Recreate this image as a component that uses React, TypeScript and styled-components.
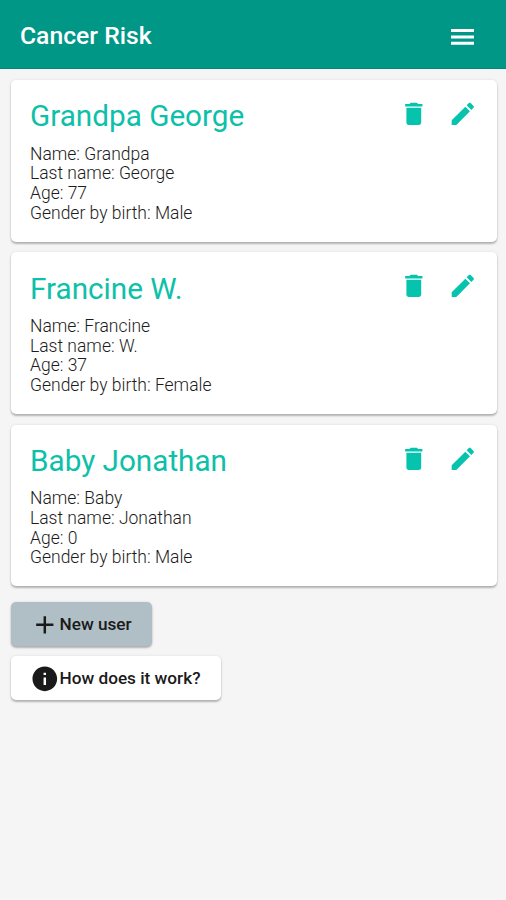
import React from "react";
import styled, { createGlobalStyle } from "styled-components";
import { MdAdd, MdDelete, MdEdit, MdInfo } from "react-icons/md";

const GlobalStyle = createGlobalStyle`
  *, *::before, *::after { box-sizing: border-box; }
  body { margin: 0; background: #f5f5f5; }
`;

const Screen = styled.div`
  min-height: 900px;
  background: #f5f5f5;
  font-family: Roboto, "Liberation Sans", sans-serif;
  color: #1c1c1c;
`;

const Toolbar = styled.header`
  display: flex;
  align-items: center;
  justify-content: space-between;
  height: 69px;
  padding: 3px 29px 0 20px;
  background: #009787;
  border-bottom: 1px solid #078577;
  color: #fff;
`;

const AppTitle = styled.h1`
  margin: 0;
  font-size: 24.7px;
  line-height: 32px;
  font-weight: 500;
  white-space: nowrap;
`;

const IconButton = styled.button`
  display: flex;
  padding: 0;
  border: 0;
  background: none;
  color: inherit;
  cursor: pointer;
  svg {
    width: 29.6px;
    height: 29.6px;
  }
`;

const MenuButton = styled(IconButton)`
  padding: 2px 3px 0;
  svg {
    width: 23px;
    height: 16px;
  }
`;

const Content = styled.main`
  padding: 11px 9.4px 0 10.6px;
`;

const CardList = styled.div`
  display: flex;
  flex-direction: column;
  gap: 10.7px;
`;

const Card = styled.section`
  height: 161.6px;
  padding: 17.3px 19.4px 0 19.4px;
  border-radius: 5px;
  background: #fff;
  box-shadow: 0 2px 2px rgba(0, 0, 0, 0.25), 0 0 3px rgba(0, 0, 0, 0.1);
`;

const CardHeader = styled.div`
  display: flex;
  justify-content: space-between;
  height: 47.4px;
`;

const CardTitle = styled.h2`
  margin: 0;
  font-size: 29.7px;
  line-height: 38px;
  font-weight: 400;
  color: #0cc0a9;
  white-space: nowrap;
`;

const Actions = styled.div`
  display: flex;
  gap: 19.4px;
  height: 33px;
  align-items: center;
  color: #05c3ac;
`;

const Details = styled.div`
  font-size: 17.5px;
  line-height: 19.7px;
  font-weight: 300;
`;

const Buttons = styled.div`
  display: flex;
  flex-direction: column;
  align-items: flex-start;
  gap: 10px;
  margin-top: 15.6px;
`;

const RaisedButton = styled.button<{ $width: number; $muted?: boolean }>`
  display: flex;
  align-items: center;
  width: ${(p) => p.$width}px;
  height: 44.3px;
  padding: 1px 0 0 19.3px;
  border: 0;
  border-radius: 5px;
  background: ${(p) => (p.$muted ? "#b0bec5" : "#fff")};
  box-shadow: 0 2px 2px rgba(0, 0, 0, 0.25), 0 0 3px rgba(0, 0, 0, 0.1);
  color: #1a1a1a;
  font: 500 17.2px/24px Roboto, "Liberation Sans", sans-serif;
  white-space: nowrap;
  cursor: pointer;
  svg {
    flex: none;
    width: 29.6px;
    height: 29.6px;
  }
`;

const ButtonLabel = styled.span`
  margin-top: -1px;
`;

const users = [
  { title: "Grandpa George", name: "Grandpa", last: "George", age: 77, gender: "Male" },
  { title: "Francine W.", name: "Francine", last: "W.", age: 37, gender: "Female" },
  { title: "Baby Jonathan", name: "Baby", last: "Jonathan", age: 0, gender: "Male" },
];

export default function App() {
  return (
    <Screen>
      <GlobalStyle />
      <Toolbar>
        <AppTitle>Cancer Risk</AppTitle>
        <MenuButton aria-label="Menu">
          <svg viewBox="0 0 23 16" fill="currentColor">
            <path d="M0 0h23v3H0zM0 6.4h23v3H0zM0 12.8h23v3H0z" />
          </svg>
        </MenuButton>
      </Toolbar>
      <Content>
        <CardList>
          {users.map((u) => (
            <Card key={u.title}>
              <CardHeader>
                <CardTitle>{u.title}</CardTitle>
                <Actions>
                  <IconButton aria-label="Delete">
                    <MdDelete />
                  </IconButton>
                  <IconButton aria-label="Edit">
                    <MdEdit />
                  </IconButton>
                </Actions>
              </CardHeader>
              <Details>
                <div>Name: {u.name}</div>
                <div>Last name: {u.last}</div>
                <div>Age: {u.age}</div>
                <div>Gender by birth: {u.gender}</div>
              </Details>
            </Card>
          ))}
        </CardList>
        <Buttons>
          <RaisedButton $width={141.4} $muted>
            <MdAdd />
            <ButtonLabel>New user</ButtonLabel>
          </RaisedButton>
          <RaisedButton $width={210.2}>
            <MdInfo />
            <ButtonLabel>How does it work?</ButtonLabel>
          </RaisedButton>
        </Buttons>
      </Content>
    </Screen>
  );
}
